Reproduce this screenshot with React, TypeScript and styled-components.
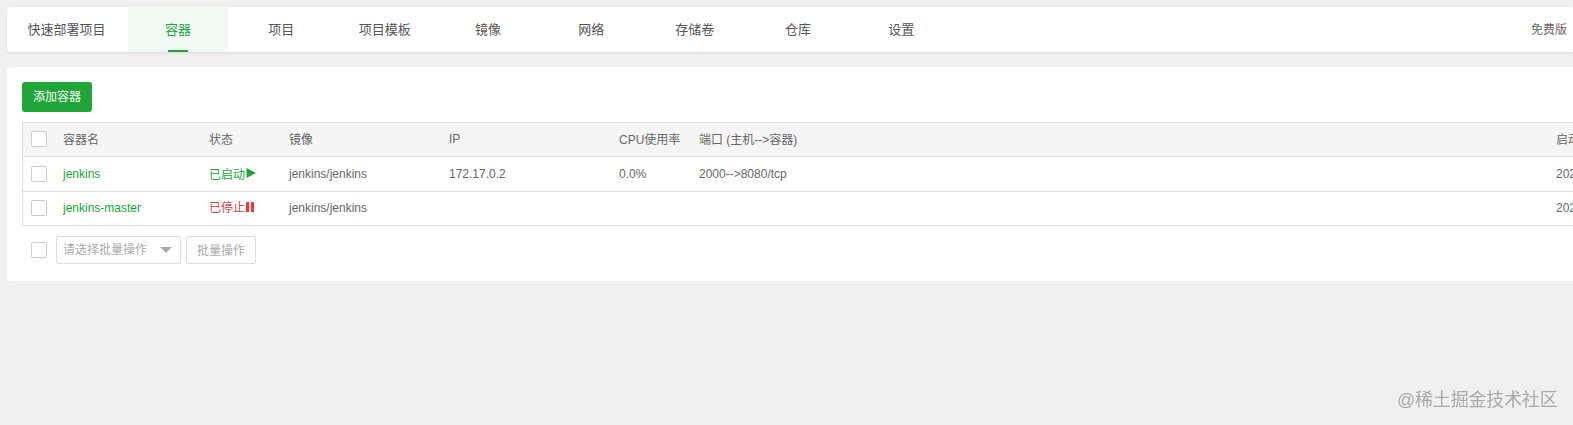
import React from "react";
import styled, { createGlobalStyle } from "styled-components";

const Global = createGlobalStyle`
  html, body { margin: 0; padding: 0; background: #f0f0f0; overflow: hidden; height: 425px; }
  body { font-family: "Liberation Sans", "Noto Sans CJK SC", sans-serif; font-size: 12px; color: #666; }
  * { box-sizing: border-box; }
`;

const Page = styled.div`
  width: 1800px;
  padding: 7px 0 0 7px;
`;

const NavBar = styled.nav`
  display: flex;
  align-items: stretch;
  width: 1566px;
  height: 45px;
  background: #fff;
  border-radius: 4px 0 0 4px;
  box-shadow: 0 1px 3px rgba(0, 0, 0, 0.1);
  margin-bottom: 15px;
`;

const NavItem = styled.div<{ $active?: boolean; $first?: boolean }>`
  position: relative;
  flex: none;
  width: ${(p) => (p.$first ? "121px" : "100px")};
  margin-right: ${(p) => (p.$first ? "0" : "3.33px")};
  padding: ${(p) => (p.$first ? "0 2px 3px 0" : "0 0 3px 0")};
  display: flex;
  align-items: center;
  justify-content: center;
  font-size: 13px;
  color: ${(p) => (p.$active ? "#20a53a" : "#555")};
  background: ${(p) => (p.$active ? "#f2f8f4" : "transparent")};
  &::after {
    content: "";
    display: ${(p) => (p.$active ? "block" : "none")};
    position: absolute;
    left: 40px;
    bottom: 0;
    width: 20px;
    height: 2px;
    background: #20a53a;
  }
`;

const Edition = styled.div`
  margin-left: auto;
  padding: 0 6px 2px 0;
  align-self: center;
  font-size: 12px;
  color: #666;
`;

const Card = styled.section`
  width: 1790px;
  height: 214px;
  background: #fff;
  border-radius: 4px;
  padding: 15px;
`;

const AddButton = styled.button`
  display: block;
  width: 70px;
  height: 30px;
  padding: 0 0 3px;
  border: 0;
  border-radius: 3px;
  background: #20a53a;
  color: #fff;
  font: inherit;
  font-size: 12px;
  margin-bottom: 10px;
`;

const Table = styled.table`
  width: 1760px;
  border-collapse: collapse;
  table-layout: fixed;
  border: 1px solid #ddd;
  font-size: 12px;
`;

const HeadRow = styled.tr`
  height: 34px;
  background: #f5f5f5;
`;

const Row = styled.tr<{ $h: number; $lift?: boolean }>`
  height: ${(p) => p.$h}px;
  border-top: 1px solid #ddd;
  & > td {
    padding-bottom: ${(p) => (p.$lift ? "2px" : "0")};
  }
`;

const Cell = styled.td`
  white-space: nowrap;
  color: #666;
  padding: 0;
`;

const HeadCell = styled.th`
  padding: 0 0 2px 0;
  font-weight: 400;
  text-align: left;
  white-space: nowrap;
  color: #666;
`;

const Check = styled.span`
  display: block;
  width: 16px;
  height: 16px;
  margin-left: 8px;
  border: 1px solid #ccc;
  border-radius: 2px;
  background: #fff;
`;

const NameLink = styled.span`
  color: #20a53a;
`;

const Status = styled.span<{ $on?: boolean }>`
  display: flex;
  align-items: center;
  gap: 1px;
  height: 16px;
  margin-top: -2px;
  color: ${(p) => (p.$on ? "#20a53a" : "#dc4040")};
`;

const Footer = styled.div`
  display: flex;
  align-items: center;
  margin-top: 10px;
  padding-left: 9px;
`;

const FooterCheck = styled(Check)`
  margin-left: 0;
  margin-right: 9px;
`;

const Select = styled.div`
  display: flex;
  align-items: center;
  justify-content: space-between;
  width: 125px;
  height: 28px;
  padding: 0 6px 4px 6px;
  border: 1px solid #ddd;
  border-radius: 2px;
  color: #aaa;
  margin-right: 5px;
`;

const Caret = styled.span`
  width: 0;
  height: 0;
  margin: 4px 2px 0 0;
  border-left: 6px solid transparent;
  border-right: 6px solid transparent;
  border-top: 6px solid #aaa;
`;

const BatchButton = styled.button`
  width: 70px;
  height: 28px;
  padding: 0 0 2px;
  border: 1px solid #ddd;
  border-radius: 2px;
  background: #fff;
  color: #aaa;
  font: inherit;
`;

const Watermark = styled.div`
  position: fixed;
  left: 1397px;
  top: 388px;
  font-size: 18px;
  line-height: 25px;
  letter-spacing: -0.2px;
  white-space: nowrap;
  color: rgba(110, 110, 110, 0.55);
`;

const cols = [40.5, 146, 80, 160, 170, 80, 857, 230];
const navs = ["项目", "项目模板", "镜像", "网络", "存储卷", "仓库", "设置"];

const Play = () => (
  <svg width="10" height="10" viewBox="0 0 10 10" aria-hidden="true">
    <path d="M0.5 0 L10 5 L0.5 10 Z" fill="#20a53a" />
  </svg>
);

const Pause = () => (
  <svg width="8" height="10" viewBox="0 0 8 10" aria-hidden="true">
    <path d="M0 0H3.2V10H0ZM4.8 0H8V10H4.8Z" fill="#dc4040" />
  </svg>
);

export default function App() {
  return (
    <>
      <Global />
      <Page>
        <NavBar>
          <NavItem $first>快速部署项目</NavItem>
          <NavItem $active>容器</NavItem>
          {navs.map((n) => (
            <NavItem key={n}>{n}</NavItem>
          ))}
          <Edition>免费版</Edition>
        </NavBar>
        <Card>
          <AddButton>添加容器</AddButton>
          <Table>
            <colgroup>
              {cols.map((w, i) => (
                <col key={i} width={w} />
              ))}
            </colgroup>
            <thead>
              <HeadRow>
                <HeadCell><Check /></HeadCell>
                <HeadCell>容器名</HeadCell>
                <HeadCell>状态</HeadCell>
                <HeadCell>镜像</HeadCell>
                <HeadCell>IP</HeadCell>
                <HeadCell>CPU使用率</HeadCell>
                <HeadCell>端口 (主机--&gt;容器)</HeadCell>
                <HeadCell>启动时间</HeadCell>
              </HeadRow>
            </thead>
            <tbody>
              <Row $h={35}>
                <Cell><Check /></Cell>
                <Cell><NameLink>jenkins</NameLink></Cell>
                <Cell><Status $on>已启动<Play /></Status></Cell>
                <Cell>jenkins/jenkins</Cell>
                <Cell>172.17.0.2</Cell>
                <Cell>0.0%</Cell>
                <Cell>2000--&gt;8080/tcp</Cell>
                <Cell>2021-01-01</Cell>
              </Row>
              <Row $h={34} $lift>
                <Cell><Check /></Cell>
                <Cell><NameLink>jenkins-master</NameLink></Cell>
                <Cell><Status>已停止<Pause /></Status></Cell>
                <Cell>jenkins/jenkins</Cell>
                <Cell />
                <Cell />
                <Cell />
                <Cell>2021-01-01</Cell>
              </Row>
            </tbody>
          </Table>
          <Footer>
            <FooterCheck />
            <Select>请选择批量操作<Caret /></Select>
            <BatchButton>批量操作</BatchButton>
          </Footer>
        </Card>
      </Page>
      <Watermark>@稀土掘金技术社区</Watermark>
    </>
  );
}
